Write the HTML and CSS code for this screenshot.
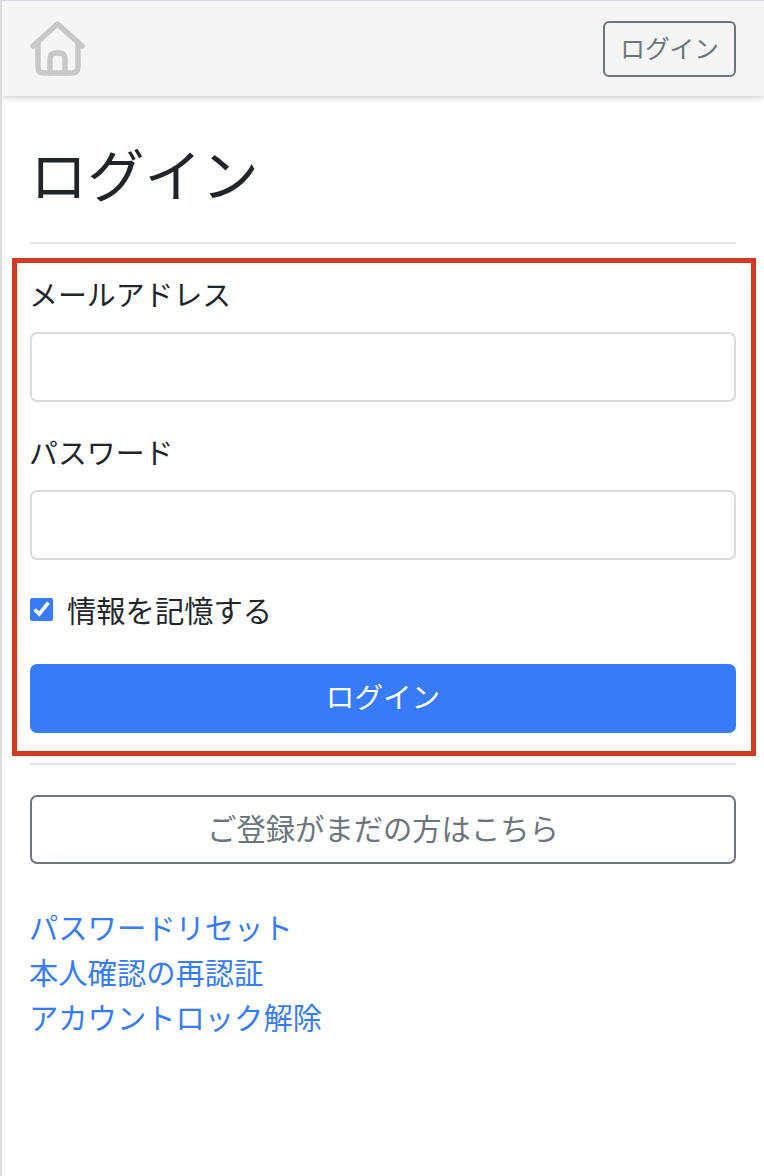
FILE: index.html
```html
<!DOCTYPE html>
<html lang="ja">
<head>
  <meta charset="UTF-8">
  <meta name="viewport" content="width=device-width, initial-scale=1.0">
  <title>ログイン</title>
  <link rel="stylesheet" href="styles.css">
</head>
<body>

<header class="navbar">
  <a class="home-link" href="#" aria-label="ホーム">
    <svg class="home-icon" width="56" height="56" viewBox="0 0 56 56" fill="none" stroke="#c8c8c8" stroke-width="5.5" stroke-linecap="round" stroke-linejoin="round">
      <path d="M3 25 L27.5 3 L52 25"/>
      <path d="M8 22 V46 Q8 52 14 52 H41 Q48 52 48 46 V22"/>
      <path d="M20 52 V38 Q20 32 26 32 H29 Q35 32 35 38 V52"/>
    </svg>
  </a>
  <a class="nav-login" href="#">ログイン</a>
</header>

<main class="content">
  <h1 class="page-title">ログイン</h1>
  <hr class="rule rule-top">

  <form class="login-form">
    <label class="field-label" for="email">メールアドレス</label>
    <input class="field-input" type="email" id="email">

    <label class="field-label field-label-second" for="password">パスワード</label>
    <input class="field-input" type="password" id="password">

    <label class="remember">
      <input class="remember-check" type="checkbox" checked>
      <span>情報を記憶する</span>
    </label>

    <button class="btn-submit" type="button">ログイン</button>
  </form>

  <hr class="rule rule-bottom">

  <a class="btn-register" href="#">ご登録がまだの方はこちら</a>

  <ul class="help-links">
    <li><a href="#">パスワードリセット</a></li>
    <li><a href="#">本人確認の再認証</a></li>
    <li><a href="#">アカウントロック解除</a></li>
  </ul>
</main>

</body>
</html>
```

FILE: styles.css
```css
* {
  box-sizing: border-box;
}

html, body {
  height: 100%;
}

body {
  margin: 0;
  font-family: "Noto Sans CJK JP", "Noto Sans", sans-serif;
  font-size: 29.3px;
  line-height: 1.5;
  color: #212529;
  background-color: #fff;
  border-left: 2px solid #dcdcdc;
  overflow: hidden;
}

a {
  text-decoration: none;
}

.navbar {
  display: flex;
  justify-content: space-between;
  align-items: center;
  height: 96px;
  padding: 0 28px;
  background-color: #f5f5f5;
  border-top: 1px solid #d9d9ec;
  box-shadow: 0 2px 6px rgba(0, 0, 0, 0.18);
}

.home-link {
  display: block;
  height: 56px;
}

.nav-login {
  display: block;
  height: 56px;
  padding: 0 15px;
  font-size: 24.7px;
  line-height: 48px;
  color: #6c757d;
  border: 2px solid #6c757d;
  border-radius: 6px;
}

.content {
  padding: 0 28px;
}

.page-title {
  margin: 0;
  padding-top: 33px;
  font-size: 57.2px;
  font-weight: 400;
  line-height: 86px;
}

.rule {
  height: 2px;
  margin: 0;
  border: none;
  background-color: #e5e5e5;
}

.rule-top {
  margin-top: 27px;
}

.rule-bottom {
  margin-top: 7px;
}

.login-form {
  margin: 14px -20px 0 -18px;
  padding: 9px 15px 18px 13px;
  border: 5px solid #d13a1f;
}

.field-label {
  display: block;
  height: 43px;
  margin-left: -1px;
  font-size: 28.9px;
  line-height: 43px;
}

.field-label-second {
  margin-top: 28px;
}

.field-input {
  display: block;
  width: 100%;
  height: 70px;
  margin-top: 17px;
  border: 2px solid #d8dadf;
  border-radius: 7px;
  background-color: #fff;
}

.remember {
  display: flex;
  align-items: center;
  gap: 14px;
  margin-top: 28px;
  height: 43px;
}

.remember-check {
  width: 23px;
  height: 23px;
  margin: 0;
  accent-color: #377bf7;
}

.btn-submit {
  display: block;
  width: 100%;
  height: 69px;
  margin-top: 33px;
  padding: 0 0 6px;
  font-family: inherit;
  font-size: 28.6px;
  color: #fff;
  background-color: #377bf7;
  border: none;
  border-radius: 7px;
}

.btn-register {
  display: block;
  height: 69px;
  margin-top: 30px;
  line-height: 60px;
  text-align: center;
  color: #6c757d;
  border: 2px solid #6c757d;
  border-radius: 7px;
}

.help-links {
  margin: 40px 0 0 -1px;
  padding: 0;
  list-style: none;
}

.help-links li {
  height: 45px;
  line-height: 45px;
}

.help-links a {
  color: #377bf7;
}
```
